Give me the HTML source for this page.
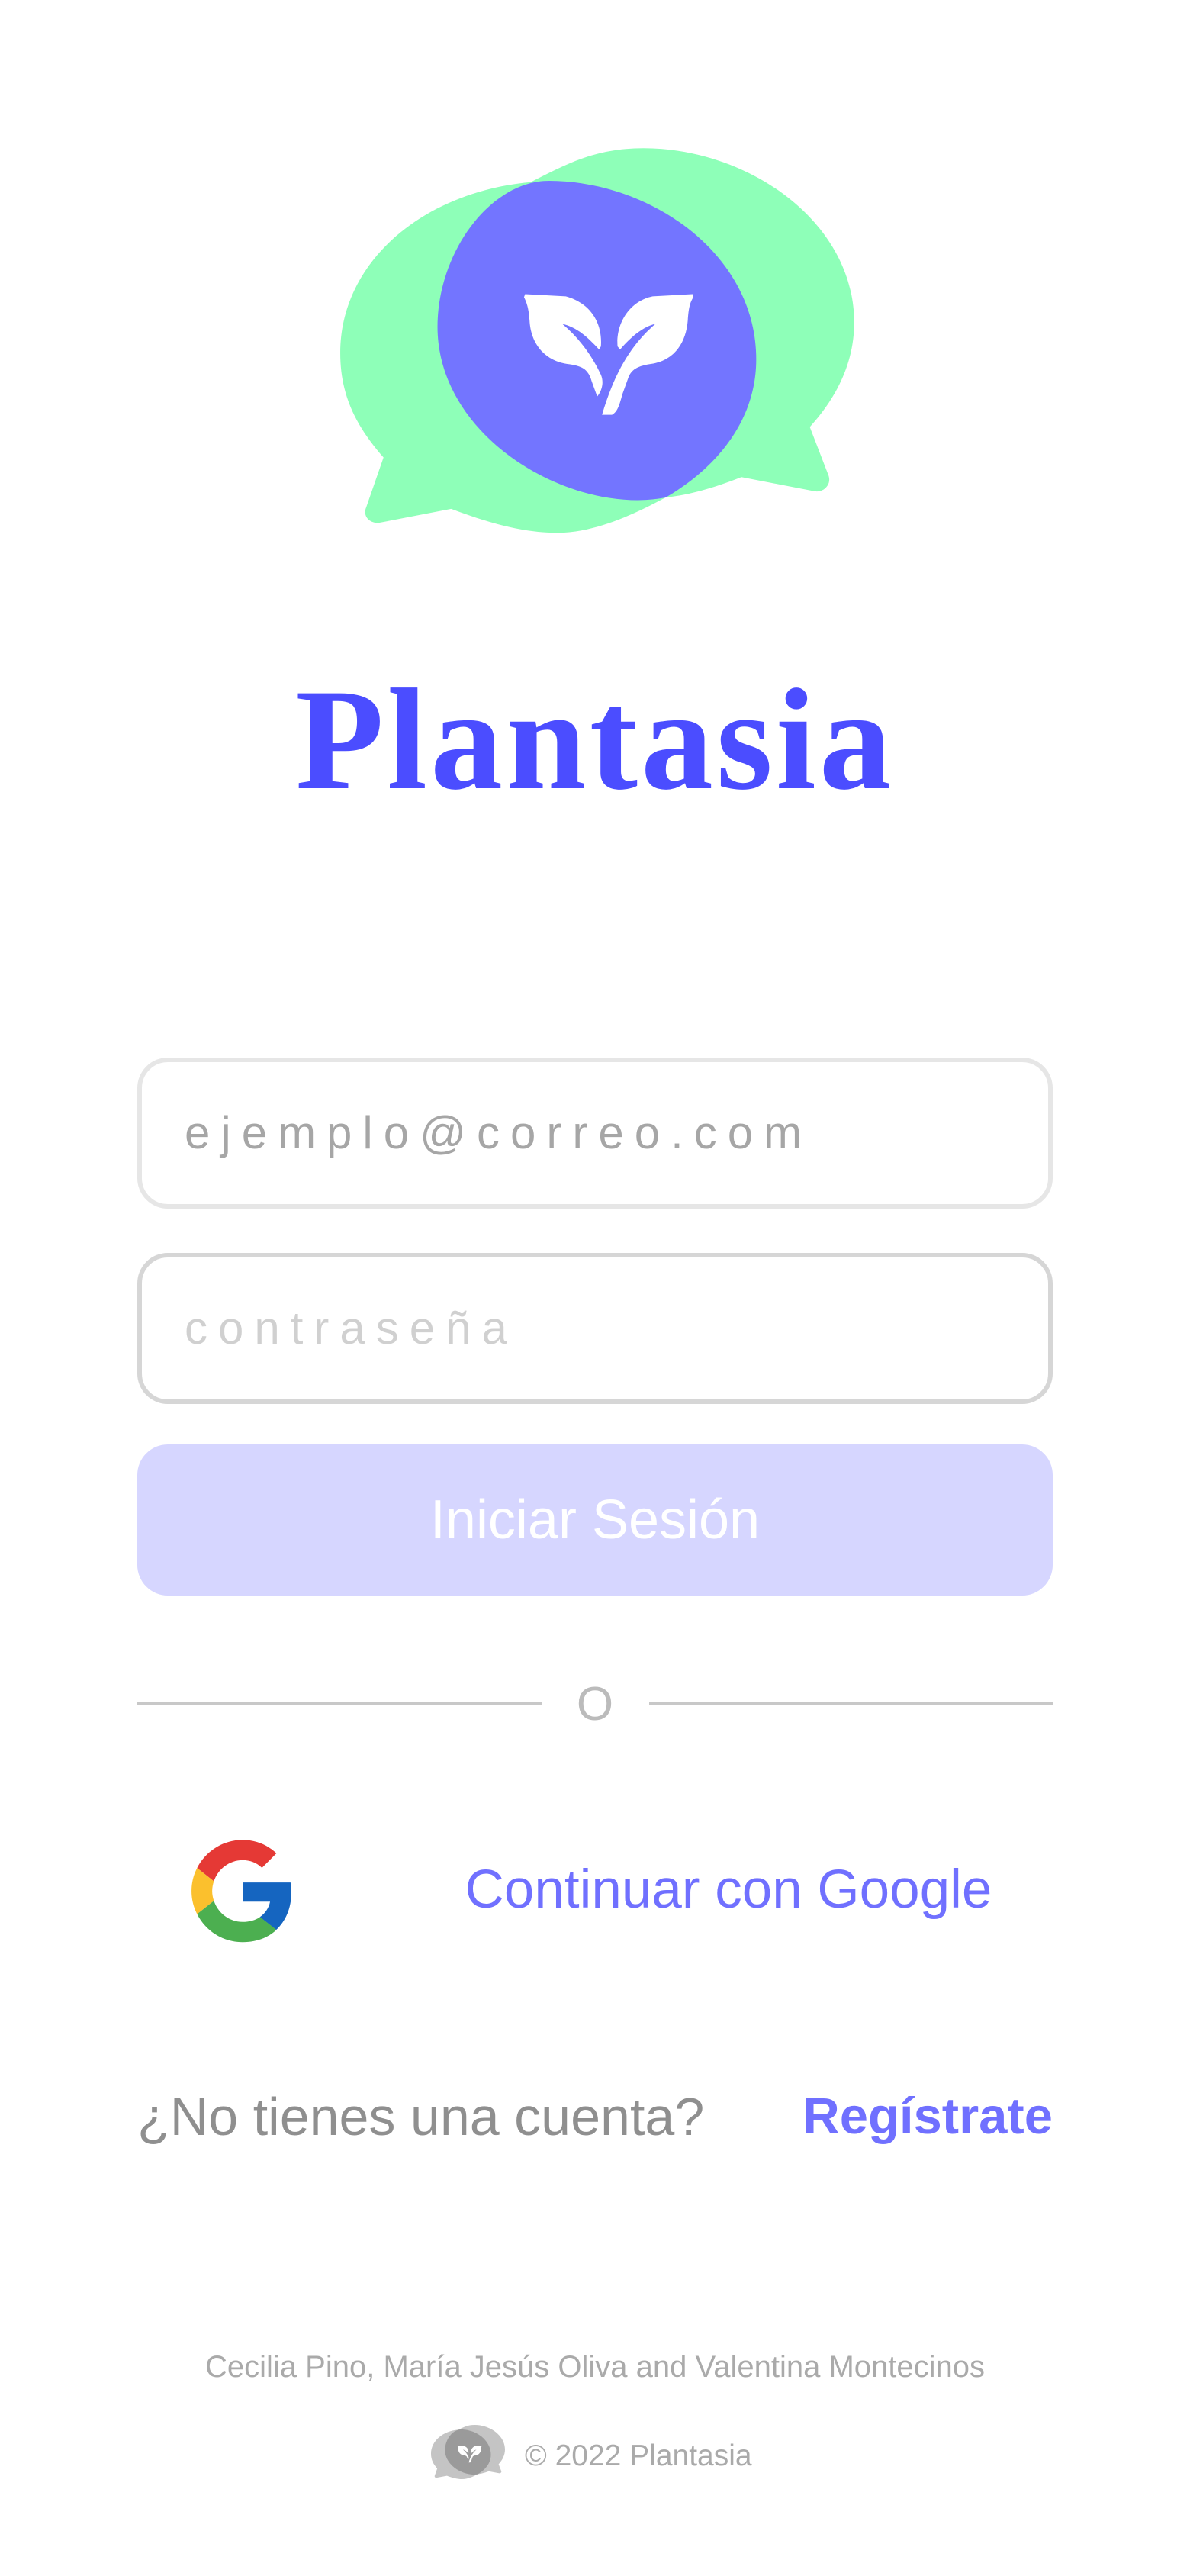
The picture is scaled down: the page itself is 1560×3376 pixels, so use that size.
<!DOCTYPE html>
<html><head><meta charset="utf-8"><style>
html,body{margin:0;padding:0;background:#fff;}
body{width:1560px;height:3376px;position:relative;overflow:hidden;font-family:"Liberation Sans",Arial,sans-serif;}
.abs{position:absolute;}
.field{position:absolute;left:180px;width:1200px;height:198px;box-sizing:border-box;border-radius:40px;background:#fff;}
.ph{position:absolute;left:56px;top:0;line-height:186px;font-size:60px;letter-spacing:14px;}
</style></head><body>

<svg class="abs" style="left:400px;top:160px" width="760" height="1060" viewBox="0 0 1568 1857" preserveAspectRatio="none">
<path fill="#8effb8" d="M212,770 L165,885 C155,905 175,922 200,920 L395,888 C480,915 580,943 680,943 C780,943 880,905 975,862 C1050,855 1120,835 1180,815 L1380,848 C1405,850 1425,830 1415,810 L1365,700 C1440,630 1485,550 1485,460 C1485,230 1200,60 915,60 C780,60 700,100 610,138 C320,160 95,320 95,530 C95,630 140,700 212,770 Z"/>
<path fill="#7375ff" d="M660,135 C500,135 358,300 358,470 C358,700 650,868 900,868 C940,868 975,862 975,862 C1120,790 1220,680 1220,545 C1220,300 930,135 660,135 Z"/>
<g fill="#fff">
<path d="M595,395 L705,400 C770,415 805,460 800,515 L795,522 C760,490 735,472 695,463 C740,495 775,535 800,580 C810,600 800,620 790,630 L775,595 C765,565 745,560 715,556 C650,550 610,510 607,455 C605,430 600,415 592,402 Z"/>
<path d="M1048,395 L940,400 C880,410 840,460 845,515 L852,522 C885,490 915,470 948,463 C890,505 840,565 803,672 L830,672 C845,665 850,650 858,625 L875,585 C885,565 905,560 930,556 C995,550 1030,510 1035,455 C1037,430 1040,415 1050,402 Z"/>
</g>
</svg>

<div class="abs" style="left:0;width:1560px;top:870px;text-align:center;font-family:'Liberation Serif',serif;font-size:190px;font-weight:bold;line-height:200px;color:#4b4dff;letter-spacing:4px;">Plantasia</div>

<div class="field" style="top:1386px;border:6px solid #e6e6e6;"><div class="ph" style="color:#a6a6a6;">ejemplo@correo.com</div></div>
<div class="field" style="top:1642px;border:6px solid #d6d6d6;"><div class="ph" style="color:#d0d0d0;">contraseña</div></div>
<div class="abs" style="left:180px;top:1893px;width:1200px;height:198px;border-radius:40px;background:#d6d6ff;color:#fff;font-size:72px;line-height:198px;text-align:center;">Iniciar Sesión</div>

<div class="abs" style="left:180px;top:2231px;width:531px;height:3px;background:#c8c8c8;"></div>
<div class="abs" style="left:851px;top:2231px;width:529px;height:3px;background:#c8c8c8;"></div>
<div class="abs" style="left:730px;width:100px;top:2194px;text-align:center;font-size:62px;line-height:80px;color:#bbb;">O</div>

<svg class="abs" style="left:244px;top:2399px" width="148" height="148" viewBox="0 0 48 48">
<g transform="translate(2.3 4) scale(0.905)">
<path fill="#E53935" d="M24 9.5c3.5 0 6.6 1.2 9.1 3.6l6.8-6.8C35.8 2.4 30.3 0 24 0 14.6 0 6.6 5.4 2.6 13.2l7.9 6.2C12.4 13.700 17.7 9.5 24 9.5z"/>
<path fill="#1565C0" d="M46.9 24.5c0-1.6-.1-3.1-.4-4.5H24v9h12.9c-.6 3-2.3 5.5-4.8 7.2l7.7 6c4.5-4.2 7.1-10.3 7.1-17.7z"/>
<path fill="#FBC02D" d="M10.5 28.6c-.5-1.4-.8-3-.8-4.6s.3-3.2.8-4.6l-7.9-6.2C.9 16.5 0 20.1 0 24s.9 7.5 2.6 10.8l7.9-6.2z"/>
<path fill="#4CAF50" d="M24 48c6.5 0 11.9-2.1 15.9-5.8l-7.7-6c-2.2 1.5-5 2.3-8.2 2.3-6.3 0-11.6-4.2-13.5-9.9l-7.9 6.2C6.6 42.6 14.6 48 24 48z"/>
</g>
</svg>
<div class="abs" style="left:555px;width:800px;top:2437px;text-align:center;font-size:71px;line-height:80px;color:#7070ff;">Continuar con Google</div>

<div class="abs" style="left:180px;top:2734px;font-size:70px;line-height:80px;color:#8f8f8f;">¿No tienes una cuenta?</div>
<div class="abs" style="right:180px;top:2734px;font-size:67px;line-height:80px;color:#7070ff;font-weight:bold;">Regístrate</div>

<div class="abs" style="left:0;width:1560px;top:3080px;text-align:center;font-size:40px;line-height:44px;color:#aaa;">Cecilia Pino, María Jesús Oliva and Valentina Montecinos</div>

<svg class="abs" style="left:565px;top:3178px" width="97" height="76" viewBox="95 60 1390 945" preserveAspectRatio="none">
<path fill="#c4c4c4" d="M212,770 L165,885 C155,905 175,922 200,920 L395,888 C480,915 580,943 680,943 C780,943 880,905 975,862 C1050,855 1120,835 1180,815 L1380,848 C1405,850 1425,830 1415,810 L1365,700 C1440,630 1485,550 1485,460 C1485,230 1200,60 915,60 C780,60 700,100 610,138 C320,160 95,320 95,530 C95,630 140,700 212,770 Z"/>
<path fill="#9a9a9a" d="M660,135 C500,135 358,300 358,470 C358,700 650,868 900,868 C940,868 975,862 975,862 C1120,790 1220,680 1220,545 C1220,300 930,135 660,135 Z"/>
<g fill="#fff">
<path d="M595,395 L705,400 C770,415 805,460 800,515 L795,522 C760,490 735,472 695,463 C740,495 775,535 800,580 C810,600 800,620 790,630 L775,595 C765,565 745,560 715,556 C650,550 610,510 607,455 C605,430 600,415 592,402 Z"/>
<path d="M1048,395 L940,400 C880,410 840,460 845,515 L852,522 C885,490 915,470 948,463 C890,505 840,565 803,672 L830,672 C845,665 850,650 858,625 L875,585 C885,565 905,560 930,556 C995,550 1030,510 1035,455 C1037,430 1040,415 1050,402 Z"/>
</g>
</svg>
<div class="abs" style="left:688px;top:3197px;font-size:39px;line-height:44px;color:#aaa;">© 2022 Plantasia</div>

</body></html>
